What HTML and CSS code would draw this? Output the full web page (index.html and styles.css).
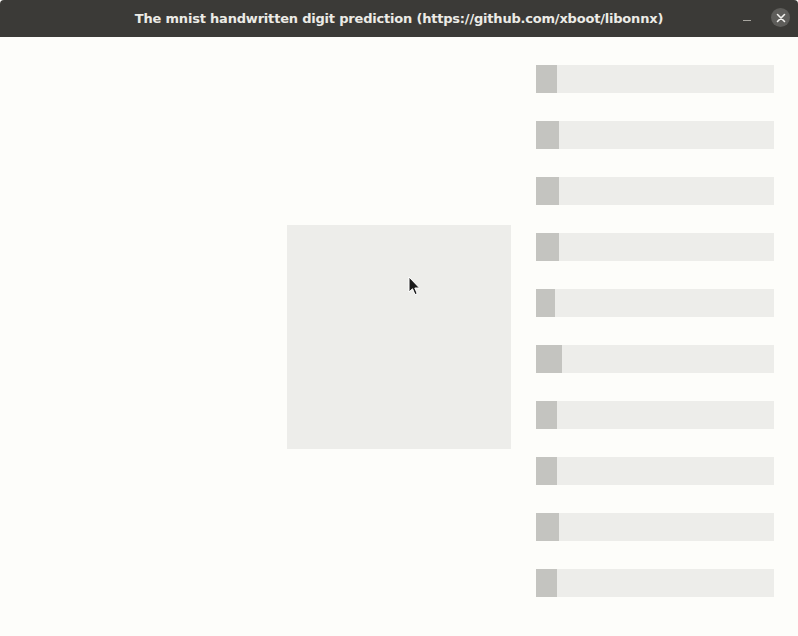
FILE: index.html
```html
<!DOCTYPE html>
<html>
<head>
<meta charset="utf-8">
<title>mnist</title>
<link rel="stylesheet" href="styles.css">
</head>
<body>
<div class="window">
  <header class="titlebar">
    <span class="title">The mnist handwritten digit prediction (https://github.com/xboot/libonnx)</span>
    <span class="minimize"></span>
    <span class="close">
      <svg width="10" height="10" viewBox="0 0 10 10"><path d="M1.5 1.5 L8.5 8.5 M8.5 1.5 L1.5 8.5" stroke="#f2f1ee" stroke-width="1.6" stroke-linecap="round"/></svg>
    </span>
  </header>
  <main class="content">
    <div class="canvas"></div>
    <div class="bars">
      <div class="bar"><div class="fill" style="width:21px"></div></div>
      <div class="bar"><div class="fill" style="width:23px"></div></div>
      <div class="bar"><div class="fill" style="width:23px"></div></div>
      <div class="bar"><div class="fill" style="width:23px"></div></div>
      <div class="bar"><div class="fill" style="width:19px"></div></div>
      <div class="bar"><div class="fill" style="width:26px"></div></div>
      <div class="bar"><div class="fill" style="width:21px"></div></div>
      <div class="bar"><div class="fill" style="width:21px"></div></div>
      <div class="bar"><div class="fill" style="width:23px"></div></div>
      <div class="bar"><div class="fill" style="width:21px"></div></div>
    </div>
    <svg class="cursor" width="14" height="22" viewBox="0 0 14 22">
      <path d="M1 1 L1 16 L4.5 12.8 L7 18.6 L9.2 17.6 L6.8 12 L11.5 12 Z" fill="#1a1a1a" stroke="#ffffff" stroke-width="1" stroke-linejoin="round"/>
    </svg>
  </main>
</div>
</body>
</html>
```
FILE: styles.css
```css
html, body {
  margin: 0;
  padding: 0;
  background: #fdfdfa;
}
.window {
  width: 798px;
  height: 636px;
  display: flex;
  flex-direction: column;
  background: #fdfdfa;
}
.titlebar {
  height: 37px;
  flex: none;
  background: #3b3a37;
  border-radius: 4px 4px 0 0;
  position: relative;
  display: flex;
  align-items: center;
  justify-content: center;
}
.title {
  font-family: "DejaVu Sans", sans-serif;
  font-weight: bold;
  font-size: 13px;
  color: #ecebe6;
  letter-spacing: -0.2px;
}
.minimize {
  position: absolute;
  left: 743px;
  top: 20px;
  width: 8px;
  height: 1px;
  background: #a8a6a0;
}
.close {
  position: absolute;
  left: 771px;
  top: 8px;
  width: 19px;
  height: 19px;
  border-radius: 50%;
  background: #5e5d5a;
  display: flex;
  align-items: center;
  justify-content: center;
}
.close svg { display: block; }
.content {
  flex: 1;
  position: relative;
  display: flex;
  padding: 0 24px 0 287px;
  gap: 25px;
}
.canvas {
  width: 224px;
  height: 224px;
  background: #ededea;
  align-self: center;
  flex: none;
}
.bars {
  display: flex;
  flex-direction: column;
  gap: 28px;
  padding-top: 28px;
  flex: 1;
}
.bar {
  height: 28px;
  background: #ededea;
  display: flex;
}
.fill {
  height: 100%;
  background: #c4c4c0;
}
.cursor {
  position: absolute;
  left: 408px;
  top: 239px;
}
```
